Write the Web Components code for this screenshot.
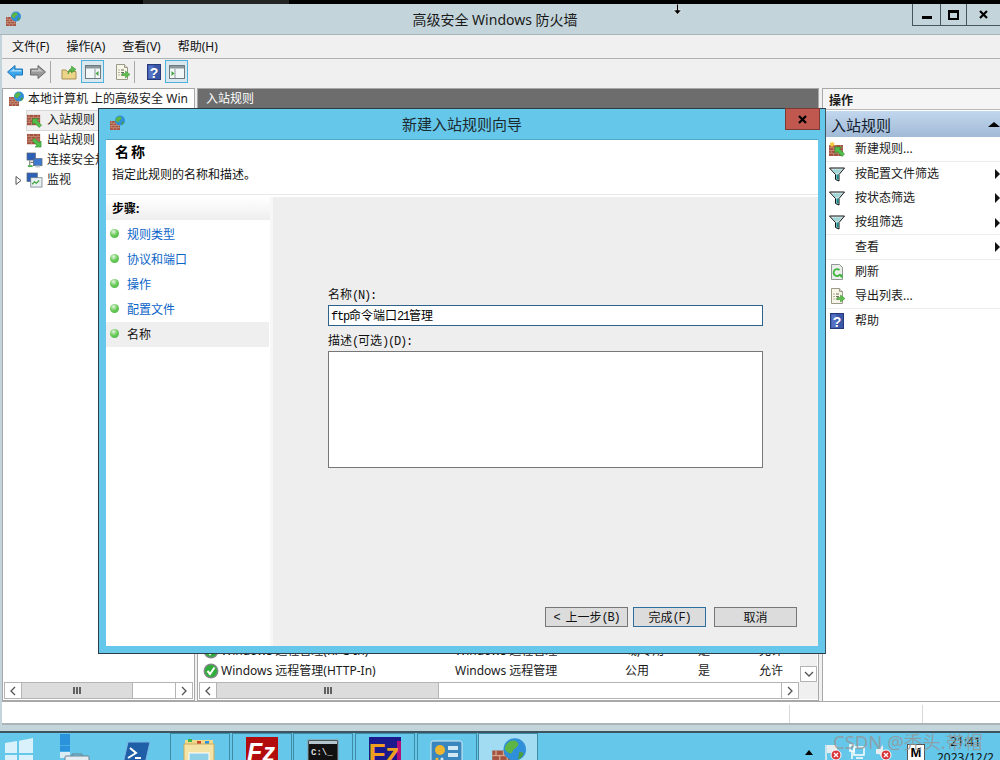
<!DOCTYPE html>
<html lang="zh-CN">
<head>
<meta charset="utf-8">
<title>高级安全 Windows 防火墙</title>
<style>
  html, body { margin: 0; padding: 0; }
  body {
    width: 1000px;
    height: 760px;
    overflow: hidden;
    position: relative;
    font: 12px/16px "Noto Sans", "Noto Sans CJK SC", sans-serif;
    color: #1a1a1a;
    background: #c3d5da;
  }
  .c { display: grid; grid-template-columns: 234px 170px 73px 61px 1fr; height: 20px; align-items: center; padding-left: 23px; }
</style>
</head>
<body>
<fw-topstrip></fw-topstrip>
<fw-titlebar>高级安全 Windows 防火墙</fw-titlebar>
<fw-menubar></fw-menubar>
<fw-toolbar></fw-toolbar>
<fw-main>
  <fw-tree slot="tree"></fw-tree>
  <fw-rules slot="rules">
    <div class="c"><span>Windows 远程管理(RPC-In)</span><span>Windows 远程管理</span><span>域,专用</span><span>是</span><span>允许</span></div>
    <div class="c"><span>Windows 远程管理(HTTP-In)</span><span>Windows 远程管理</span><span>公用</span><span>是</span><span>允许</span></div>
  </fw-rules>
  <fw-actions slot="actions"></fw-actions>
</fw-main>
<fw-statusbar></fw-statusbar>
<fw-taskbar></fw-taskbar>
<fw-wizard></fw-wizard>
<fw-watermark>CSDN @秃头.带帽</fw-watermark>

<script>
function bricks(x, y, w, h) {
  let lines = '';
  const row = h / 4;
  for (let i = 1; i < 4; i++) lines += `<path d="M${x} ${y + i * row}h${w}" stroke="#d3a48e" stroke-width=".6"/>`;
  for (let i = 0; i < 4; i++) {
    const off = i % 2 ? w / 3 : w / 6;
    for (let j = off; j < w; j += w / 3) lines += `<path d="M${x + j} ${y + i * row}v${row}" stroke="#d3a48e" stroke-width=".6"/>`;
  }
  return `<rect x="${x}" y="${y}" width="${w}" height="${h}" fill="#a4523f"/>${lines}`;
}
const GLOBE = `<circle cx="11" cy="5.5" r="5" fill="#2f8fd8"/><path d="M8 2.5c2-1.5 4-1 4.5.5s-2 2-2.500 3.500S8 7 7 6s0-2.500 1-3.500z" fill="#5cb545"/><path d="M13 6.500l2 .5c-.3 1.500-1.200 2.500-2.500 3z" fill="#4a9e3f"/>`;
const PAGE = `<path d="M2.500 .5h8l3 3v12h-11z" fill="#f7f5e6" stroke="#9a9a8a"/><path d="M10.500 .5v3h3" fill="#e4e2d2" stroke="#9a9a8a"/>`;
const ARROW_NW = `<path d="M6 6h6.500L10.500 8l5 5-2.500 2.500-5-5L6 12.500z" fill="#4fc04a" stroke="#2b8a2c" stroke-width=".6"/>`;
const ARROW_SE = `<path d="M15 15H8.500l2-2-5-5L8 5.500l5 5 2-2z" fill="#4fc04a" stroke="#2b8a2c" stroke-width=".6"/>`;
const PANEL = (side) => `<rect x=".5" y="1.500" width="15" height="13" fill="#f4f7f8" stroke="#6d7a80"/><rect x="1" y="2" width="14" height="2.500" fill="#8a979d"/><path d="M${side ? '6' : '10'} 5v9" stroke="#8a979d"/>` +
  (side ? `<path d="M2.500 7l3 2.500-3 2.500z" fill="#3fa53f"/>` : `<path d="M13.500 7l-3 2.500 3 2.500z" fill="#3fa53f"/>`);

const ICONS = {
  firewall: bricks(1, 6, 10, 9) + GLOBE,
  inbound: bricks(0, 2, 14, 11) + ARROW_NW,
  outbound: bricks(0, 1, 14, 11) + ARROW_SE,
  newrule: bricks(0, 4, 14, 11) + ARROW_NW + `<path d="M3 0l.8 2 2-.6-1 1.800 1.400 1.500-2.100 0L3 6.500 2.200 4.700l-2.100 0L1.500 3.200.5 1.400l2 .6z" fill="#f4c63a"/>`,
  connection: `<rect x="0" y="0" width="9" height="7.500" fill="#2b5fb8" stroke="#5a6a78" stroke-width=".8"/><rect x="7" y="6" width="9" height="7.500" fill="#3c78d0" stroke="#5a6a78" stroke-width=".8"/><path d="M1 13h5v2H1z" fill="#4fae4a"/><path d="M3 8v5M4 10h3" stroke="#555"/><path d="M9 13.500h5v2H9z" fill="#c4ccd0"/>`,
  monitor: `<rect x="0" y="0" width="11" height="9" fill="#2b5fb8" stroke="#5a6a78" stroke-width=".8"/><rect x="4" y="5" width="12" height="10" fill="#e8eff2" stroke="#6a7a84" stroke-width=".8"/><path d="M5.500 12l2.500-2.500 2 1.500 3-3" fill="none" stroke="#3fa53f" stroke-width="1.300"/>`,
  filter: `<path d="M.5 2h15L10 8.500V15l-3.500-1.500V8.500z" fill="#dfeeee" stroke="#111" stroke-width="1"/><path d="M7.500 8.500h2V14l-2-.9z" fill="#0f8a8a"/><path d="M3 3.500h10l-3.500 4h-3z" fill="#9fd6d6"/>`,
  refresh: `<path d="M2.500 .5h8l3 3v12h-11z" fill="#eceeec" stroke="#8f9a92"/><path d="M10.500 6a3.500 3.500 0 1 0 .8 4" fill="none" stroke="#3fb53f" stroke-width="1.800"/><path d="M9 10.500h4.500V14.500z" fill="#3fb53f"/>`,
  export: PAGE + `<path d="M4.500 6h1M7 6h3M4.500 8.500h1M7 8.500h3M4.500 11h1M7 11h3" stroke="#6d6d5f"/><path d="M8 9.500h3.500V7l4.500 3.500-4.500 3.500v-2.500H8z" fill="#5cc04a" stroke="#3a8d33" stroke-width=".5"/>`,
  help: `<rect x="1.500" y=".5" width="13" height="15" fill="#3a57a8" stroke="#26397a"/><rect x="2.500" y="1.500" width="5" height="13" fill="#5673c4"/><text x="8" y="13.500" text-anchor="middle" font-family="Liberation Sans" font-weight="700" font-size="14" fill="#fff">?</text>`,
  back: `<path d="M.5 8L8 1.500V5h7.500v6H8v3.500z" fill="#3da6ec" stroke="#1d75b8"/><path d="M2.500 8L7 4.500V6h7.500v1.500H4z" fill="#a9dcfa"/>`,
  forward: `<path d="M15.500 8L8 1.500V5H.5v6H8v3.500z" fill="#9a9a9a" stroke="#6a6a6a"/><path d="M2 6h6V4l5 3.500H2z" fill="#c7c7c7"/>`,
  folderup: `<path d="M1 6h4l1 1.500h9V15H1z" fill="#ecd489" stroke="#a99150"/><path d="M7 10c0-3.500 1.500-5 3.500-5.500V2L15 5.500 10.500 9V6.500C9 7 8 8 7 10z" fill="#59b94b" stroke="#2e8a2c" stroke-width=".5"/>`,
  panelL: PANEL(false),
  panelR: PANEL(true),
  check: `<circle cx="8" cy="8" r="7.500" fill="#7f8a88"/><circle cx="8" cy="8" r="6" fill="#2fae3a"/><path d="M4.500 8l2.500 3L11.500 4.500" fill="none" stroke="#fff" stroke-width="2"/>`,
  server: `<rect x="1" y="0" width="10" height="11" fill="#2a93dc"/><rect x="1" y="11.500" width="10" height="6" fill="#2a93dc"/><rect x="1" y="18" width="10" height="6" fill="#dcecf4"/><rect x="6" y="22" width="24" height="12" rx="1" fill="#e4edf1" stroke="#6d8390"/><path d="M13 22v-2h10v2" fill="none" stroke="#6d8390"/>`,
  powershell: `<path d="M6 1h22l-5 22H1z" fill="#1f5fa8" stroke="#7fb7e4"/><path d="M8 7l6 5-8 5" fill="none" stroke="#fff" stroke-width="2"/><path d="M13 17h6" stroke="#fff" stroke-width="2"/>`,
  folder: `<rect x="1" y="1" width="28" height="5" fill="#f0d98a"/><rect x="4" y="0" width="4" height="3" fill="#3db54a"/><rect x="13" y="2" width="4" height="3" fill="#d0452f"/><rect x="21" y="2" width="4" height="3" fill="#2a93dc"/><path d="M0 5h30v26H0z" fill="#f3e3a6" stroke="#c8ab5e"/><rect x="5" y="14" width="20" height="15" fill="#8fd0e8" stroke="#fff"/>`,
  filezilla: `<rect x="0" y="0" width="32" height="32" fill="#b30c0c"/><text x="15" y="24" text-anchor="middle" font-family="Liberation Sans" font-weight="700" font-style="italic" font-size="25" fill="#fff">Fz</text>`,
  cmd: `<rect x="0" y="0" width="30" height="28" fill="#111" stroke="#8a949a"/><rect x="1" y="1" width="28" height="3" fill="#b4c4cc"/><text x="3" y="15" font-family="Liberation Mono" font-weight="700" font-size="9" fill="#ddd">C:\\_</text>`,
  fz: `<rect x="0" y="0" width="32" height="32" fill="#1a1a8c"/><rect x="28" y="4" width="4" height="28" fill="#b0127a"/><text x="15" y="26" text-anchor="middle" font-family="Liberation Sans" font-weight="700" font-size="28" fill="#f0a020">Fz</text>`,
  control: `<rect x="0" y="0" width="31" height="28" rx="2" fill="#3a86bf" stroke="#d5e8f2"/><circle cx="9" cy="9" r="5" fill="#f0b62e"/><rect x="17" y="5" width="10" height="4" fill="#d0e8f4"/><rect x="17" y="12" width="10" height="4" fill="#d0e8f4"/><circle cx="6" cy="18" r="1.500" fill="#f0b62e"/><circle cx="11" cy="18" r="1.500" fill="#d0e8f4"/>`,
  flag: `<path d="M1 1v15" stroke="#e8eef0" stroke-width="1.500"/><path d="M2 1h10v8H2z" fill="#e8eef0"/><circle cx="11" cy="11" r="5" fill="#d8343a" stroke="#fff"/><path d="M9 9l4 4M13 9l-4 4" stroke="#fff" stroke-width="1.300"/>`,
  network: `<rect x="5" y="3" width="10" height="8" fill="none" stroke="#fff" stroke-width="1.500"/><path d="M1 1h4v6H1zM3 7v8M7 14h7" fill="none" stroke="#fff" stroke-width="1.500"/>`,
  speaker: `<path d="M1 5h3l4-4v13l-4-4H1z" fill="#e8eef0"/><circle cx="11" cy="11" r="5" fill="#d8343a" stroke="#fff"/><path d="M9 9l4 4M13 9l-4 4" stroke="#fff" stroke-width="1.300"/>`
};

class FwIcon extends HTMLElement {
  connectedCallback() {
    const name = this.getAttribute('name');
    const w = this.getAttribute('size') || 16;
    const vb = this.getAttribute('vb') || 16;
    this.attachShadow({ mode: 'open' }).innerHTML = `
      <style>:host { display: block; width: ${w}px; height: ${w}px; flex: none; } svg { display: block; overflow: visible; }</style>
      <svg width="${w}" height="${w}" viewBox="0 0 ${vb} ${vb}">${ICONS[name]}</svg>`;
  }
}
customElements.define('fw-icon', FwIcon);

class FwTopstrip extends HTMLElement {
  connectedCallback() {
    this.attachShadow({ mode: 'open' }).innerHTML = `
      <style>
        :host { display: flex; height: 4px; background: #000; position: relative; }
        .a { width: 45px; margin-left: 2px; background: #000; }
        .b { width: 146px; margin-left: 96px; background: #242424; }
        svg { position: absolute; left: 673px; top: 4px; z-index: 5; }
      </style>
      <div class="a"></div><div class="b"></div>
      <svg width="9" height="11" viewBox="0 0 9 11"><path d="M3.500 0h2v6H8.500L4.500 10.500.5 6h3z" fill="#000" stroke="#fff" stroke-width=".7"/></svg>`;
  }
}
customElements.define('fw-topstrip', FwTopstrip);

class FwTitlebar extends HTMLElement {
  connectedCallback() {
    this.attachShadow({ mode: 'open' }).innerHTML = `
      <style>
        :host { display: flex; height: 30px; background: #c3d5da; border-bottom: 1px solid #a9b4b8; position: relative; box-sizing: content-box; }
        .icon { padding: 7px 0 0 5px; }
        .title { text-align: center; font-size: 14px; line-height: 32px; color: #1a1a1a; position: absolute; left: 0; right: 10px; }
        .ctl { margin-left: auto; display: flex; height: 21px; border: 1px solid #46565e; border-top: 0; border-right: 0; position: relative; }
        .ctl div { display: flex; align-items: center; justify-content: center; }
        .min { width: 27px; border-right: 1px solid #46565e; }
        .max { width: 25px; border-right: 1px solid #46565e; }
        .cls { width: 33px; }
        .min i { width: 10px; height: 3px; background: #000; margin-top: 6px; }
        .max i { width: 7px; height: 5px; border: 2px solid #000; border-top-width: 3px; }
      </style>
      <div class="icon"><fw-icon name="firewall" size="16"></fw-icon></div>
      <div class="title"><slot></slot></div>
      <div class="ctl">
        <div class="min"><i></i></div>
        <div class="max"><i></i></div>
        <div class="cls"><svg width="9" height="9" viewBox="0 0 9 9"><path d="M1 1l7 7M8 1L1 8" stroke="#000" stroke-width="2.200"/></svg></div>
      </div>`;
  }
}
customElements.define('fw-titlebar', FwTitlebar);

class FwMenubar extends HTMLElement {
  connectedCallback() {
    const items = ['文件(F)', '操作(A)', '查看(V)', '帮助(H)'];
    this.attachShadow({ mode: 'open' }).innerHTML = `
      <style>
        :host { display: flex; height: 23px; margin: 0 0 0 2px; padding-left: 10px; gap: 17px; background: #f0f0f0; border-bottom: 1px solid #aeb2b4; align-items: center; font-size: 12px; color: #111; }
      </style>
      ${items.map(t => `<span>${t}</span>`).join('')}`;
  }
}
customElements.define('fw-menubar', FwMenubar);

class FwToolbar extends HTMLElement {
  connectedCallback() {
    this.attachShadow({ mode: 'open' }).innerHTML = `
      <style>
        :host { display: flex; height: 29px; box-sizing: border-box; margin-left: 2px; background: #f0f0f0; align-items: center; padding: 1px 0 5px 5px; }
        .sep { width: 1px; height: 22px; background: #a8a8a8; }
        .on { width: 21px; height: 21px; border: 1px solid #4fb0dc; background: #d9e8ef; display: flex; align-items: center; justify-content: center; }
      </style>
      <fw-icon name="back"></fw-icon>
      <fw-icon name="forward" style="margin-left:7px"></fw-icon>
      <div class="sep" style="margin-left:4px"></div>
      <fw-icon name="folderup" style="margin-left:10px"></fw-icon>
      <div class="on" style="margin-left:4px"><fw-icon name="panelL"></fw-icon></div>
      <fw-icon name="export" style="margin-left:10px"></fw-icon>
      <div class="sep" style="margin-left:4px"></div>
      <fw-icon name="help" style="margin-left:11px"></fw-icon>
      <div class="on" style="margin-left:3px"><fw-icon name="panelR"></fw-icon></div>`;
  }
}
customElements.define('fw-toolbar', FwToolbar);

class FwMain extends HTMLElement {
  connectedCallback() {
    this.attachShadow({ mode: 'open' }).innerHTML = `
      <style>
        :host { display: grid; grid-template-columns: 193px 622px 1fr; gap: 2px; height: 613px; margin-left: 2px; background: #f0f0f0; }
      </style>
      <slot name="tree"></slot><slot name="rules"></slot><slot name="actions"></slot>`;
  }
}
customElements.define('fw-main', FwMain);

class FwScroll extends HTMLElement {
  connectedCallback() {
    const thumb = this.getAttribute('thumb');
    const chev = (d) => `<svg width="8" height="10" viewBox="0 0 8 10"><path d="${d}" fill="none" stroke="#555" stroke-width="1.300"/></svg>`;
    this.attachShadow({ mode: 'open' }).innerHTML = `
      <style>
        :host { display: flex; height: 15px; border: 1px solid #b4b4b4; background: #fff; }
        .a { width: 16px; display: flex; align-items: center; justify-content: center; background: #fff; flex: none; }
        .l { border-right: 1px solid #b4b4b4; }
        .r { border-left: 1px solid #b4b4b4; margin-left: auto; }
        .t { width: ${thumb}px; background: #dcdcdc; border-right: 1px solid #b4b4b4; display: flex; align-items: center; justify-content: center; gap: 1px; }
        .t i { width: 2px; height: 7px; background: #606060; }
      </style>
      <div class="a l">${chev('M6 1L2 5l4 4')}</div>
      <div class="t"><i></i><i></i><i></i></div>
      <div class="a r">${chev('M2 1l4 4-4 4')}</div>`;
  }
}
customElements.define('fw-scroll', FwScroll);

class FwTreeItem extends HTMLElement {
  connectedCallback() {
    const sel = this.hasAttribute('selected');
    const exp = this.hasAttribute('expander');
    this.attachShadow({ mode: 'open' }).innerHTML = `
      <style>
        :host { display: flex; height: 20px; align-items: center; padding-left: 24px; position: relative; }
        .box { display: flex; align-items: center; gap: 5px; height: 19px; padding-right: 5px; ${sel ? 'background:#f0f0f0;outline:1px solid #d8d8d8;' : ''} width: 165px; }
        svg { position: absolute; left: 12px; top: 6px; }
      </style>
      ${exp ? '<svg width="7" height="9" viewBox="0 0 7 9"><path d="M1 .5l5 4-5 4z" fill="#fff" stroke="#555"/></svg>' : ''}
      <div class="box"><fw-icon name="${this.getAttribute('icon')}" size="15"></fw-icon><span><slot></slot></span></div>`;
  }
}
customElements.define('fw-tree-item', FwTreeItem);

class FwTree extends HTMLElement {
  connectedCallback() {
    this.attachShadow({ mode: 'open' }).innerHTML = `
      <style>
        :host { display: flex; flex-direction: column; background: #fff; border: 1px solid #a8a8a8; box-sizing: border-box; height: 613px; }
        .root { display: flex; height: 20px; align-items: center; gap: 4px; padding-left: 5px; white-space: nowrap; overflow: hidden; flex: none; }
        .body { flex: 1; padding-top: 1px; }
        fw-scroll { margin: 0 1px 1px; }
      </style>
      <div class="root"><fw-icon name="firewall"></fw-icon><span>本地计算机 上的高级安全 Win</span></div>
      <div class="body">
        <fw-tree-item icon="inbound" selected>入站规则</fw-tree-item>
        <fw-tree-item icon="outbound">出站规则</fw-tree-item>
        <fw-tree-item icon="connection">连接安全规则</fw-tree-item>
        <fw-tree-item icon="monitor" expander>监视</fw-tree-item>
      </div>
      <fw-scroll thumb="110"></fw-scroll>`;
  }
}
customElements.define('fw-tree', FwTree);

class FwRules extends HTMLElement {
  connectedCallback() {
    this.attachShadow({ mode: 'open' }).innerHTML = `
      <style>
        :host { display: flex; flex-direction: column; background: #fff; border: 1px solid #a8a8a8; box-sizing: border-box; height: 613px; }
        .head { height: 19px; background: #6d6d6d; color: #fff; line-height: 20px; padding-left: 8px; flex: none; }
        .mid { flex: 1; display: flex; min-height: 0; }
        .list { flex: 1; display: flex; flex-direction: column; justify-content: flex-end; position: relative; padding-bottom: 1px; }
        .list fw-icon { position: absolute; left: 5px; bottom: 3px; }
        .list .i2 { bottom: 23px; }
        .vs { width: 17px; background: #f0f0f0; display: flex; flex-direction: column; justify-content: flex-end; flex: none; margin-right: 1px; }
        .down { height: 14px; border: 1px solid #b4b4b4; background: #fff; display: flex; align-items: center; justify-content: center; }
        .foot { display: flex; margin: 0 0 1px 1px; }
        fw-scroll { width: 598px; }
        .corner { flex: 1; background: #f0f0f0; }
      </style>
      <div class="head">入站规则</div>
      <div class="mid">
        <div class="list"><fw-icon class="i2" name="check"></fw-icon><fw-icon name="check"></fw-icon><slot></slot></div>
        <div class="vs"><div class="down"><svg width="10" height="8" viewBox="0 0 10 8"><path d="M1 2l4 4 4-4" fill="none" stroke="#555" stroke-width="1.300"/></svg></div></div>
      </div>
      <div class="foot"><fw-scroll thumb="221"></fw-scroll><div class="corner"></div></div>`;
  }
}
customElements.define('fw-rules', FwRules);

class FwAction extends HTMLElement {
  connectedCallback() {
    const icon = this.getAttribute('icon');
    const sep = this.hasAttribute('sep');
    const arrow = this.hasAttribute('arrow');
    this.attachShadow({ mode: 'open' }).innerHTML = `
      <style>
        :host { display: flex; height: 24.500px; align-items: center; padding-left: 6px; box-sizing: border-box; position: relative; ${sep ? 'border-bottom: 1px solid #ececec;' : ''} }
        .ic { width: 26px; flex: none; }
        .ar { position: absolute; right: 0; top: 7px; width: 0; height: 0; border: 5px solid transparent; border-left: 5px solid #111; border-right: 0; }
      </style>
      <div class="ic">${icon ? `<fw-icon name="${icon}"></fw-icon>` : ''}</div>
      <span><slot></slot></span>
      ${arrow ? '<i class="ar"></i>' : ''}`;
  }
}
customElements.define('fw-action', FwAction);

class FwActions extends HTMLElement {
  connectedCallback() {
    this.attachShadow({ mode: 'open' }).innerHTML = `
      <style>
        :host { display: block; margin-left: 1px; background: #fff; border-left: 1px solid #a8a8a8; border-top: 1px solid #a8a8a8; box-sizing: border-box; height: 613px; }
        .h { height: 21px; line-height: 23px; background: #f5f5f5; border-bottom: 1px solid #b8b8b8; padding-left: 6px; font-weight: 700; font-size: 12px; box-sizing: border-box; }
        .s { height: 26px; line-height: 28px; padding-left: 8px; font-size: 15px; color: #14202e; background: linear-gradient(#c2d7ee, #a1bad6); position: relative; margin-top: 1px; }
        .s i { position: absolute; right: 0; top: 11px; border: 4px solid transparent; border-bottom: 5px solid #000; border-top: 0; border-left-width: 6px; border-right-width: 6px; }
      </style>
      <div class="h">操作</div>
      <div class="s">入站规则<i></i></div>
      <div class="items">
        <fw-action icon="newrule" sep>新建规则...</fw-action>
        <fw-action icon="filter" arrow>按配置文件筛选</fw-action>
        <fw-action icon="filter" arrow>按状态筛选</fw-action>
        <fw-action icon="filter" arrow sep>按组筛选</fw-action>
        <fw-action arrow sep>查看</fw-action>
        <fw-action icon="refresh">刷新</fw-action>
        <fw-action icon="export" sep>导出列表...</fw-action>
        <fw-action icon="help">帮助</fw-action>
      </div>`;
  }
}
customElements.define('fw-actions', FwActions);

class FwStatusbar extends HTMLElement {
  connectedCallback() {
    this.attachShadow({ mode: 'open' }).innerHTML = `
      <style>
        :host { display: grid; grid-template-columns: 787px 133px 1fr; height: 21px; margin-left: 2px; background: #fff; border-top: 1px solid #a8a8a8; border-bottom: 2px solid #a9b4b8; box-sizing: content-box; }
        div + div { border-left: 1px solid #d8d8d8; margin: 3px 0 0; }
      </style>
      <div></div><div></div><div></div>`;
  }
}
customElements.define('fw-statusbar', FwStatusbar);

class FwTaskButton extends HTMLElement {
  connectedCallback() {
    const active = this.hasAttribute('active');
    this.attachShadow({ mode: 'open' }).innerHTML = `
      <style>
        :host { display: flex; justify-content: center; width: 60px; height: 27px; flex: none; overflow: hidden; padding-top: ${this.getAttribute('top') || 4}px; box-sizing: border-box; border: 1px solid #3f8ba6; border-bottom: 0; margin-right: 1.700px; background: ${active ? '#a1dcf2' : 'transparent'}; }
      </style>
      <slot></slot>`;
  }
}
customElements.define('fw-task-button', FwTaskButton);

class FwTaskbar extends HTMLElement {
  connectedCallback() {
    this.attachShadow({ mode: 'open' }).innerHTML = `
      <style>
        :host { position: absolute; left: 0; right: 0; bottom: 0; height: 27px; display: flex; background: #65c8ea; border-top: 2px solid #3d5560; box-sizing: content-box; overflow: hidden; }
        .pin { display: flex; width: 170px; flex: none; padding-left: 5px; box-sizing: border-box; align-items: flex-start; }
        .tray { margin-left: auto; display: flex; align-items: flex-start; padding-top: 11px; }
        .tri { width: 0; height: 0; border: 4px solid transparent; border-bottom: 5px solid #000; border-top: 0; margin: 6px 12px 0 0; }
        .m { width: 16px; height: 16px; border: 1px solid #555; background: #fff; text-align: center; font: 700 13px/16px "Liberation Sans", sans-serif; color: #000; margin: 0 0 0 16px; }
        .clock { width: 75px; box-sizing: border-box; padding-left: 6px; text-align: center; margin-top: -10px; color: #111; line-height: 16px; }
      </style>
      <div class="pin">
        <svg width="28" height="30" viewBox="0 0 28 30" style="margin-top:5px"><path d="M0 5l12-2v12H0zM14 2.700L28 0v15H14zM0 17h12v12L0 27zM14 17h14v13l-14-2z" fill="#fff" fill-opacity=".75"/></svg>
        <fw-icon name="server" size="36" vb="36" style="margin:1px 0 0 26px"></fw-icon>
        <fw-icon name="powershell" size="30" vb="30" style="margin:8px 0 0 27px"></fw-icon>
      </div>
      <fw-task-button top="5"><fw-icon name="folder" size="32" vb="32"></fw-icon></fw-task-button>
      <fw-task-button top="3"><fw-icon name="filezilla" size="32" vb="32"></fw-icon></fw-task-button>
      <fw-task-button top="6"><fw-icon name="cmd" size="30" vb="30"></fw-icon></fw-task-button>
      <fw-task-button top="3"><fw-icon name="fz" size="32" vb="32"></fw-icon></fw-task-button>
      <fw-task-button top="7"><fw-icon name="control" size="32" vb="32"></fw-icon></fw-task-button>
      <fw-task-button active top="3"><fw-icon name="firewall" size="36"></fw-icon></fw-task-button>
      <div class="tray">
        <div class="tri"></div>
        <fw-icon name="flag"></fw-icon>
        <fw-icon name="network" style="margin-left:8px"></fw-icon>
        <fw-icon name="speaker" style="margin-left:10px"></fw-icon>
        <div class="m">M</div>
        <div class="clock">21:41<br>2023/12/2</div>
      </div>`;
  }
}
customElements.define('fw-taskbar', FwTaskbar);

class FwStep extends HTMLElement {
  connectedCallback() {
    const cur = this.hasAttribute('current');
    this.attachShadow({ mode: 'open' }).innerHTML = `
      <style>
        :host { display: flex; height: 25px; align-items: center; padding-left: 4px; gap: 8px; width: 163px; box-sizing: border-box; color: ${cur ? '#111' : '#0a64c8'}; background: ${cur ? '#efefef' : 'transparent'}; }
        i { width: 9px; height: 9px; border-radius: 50%; background: radial-gradient(circle at 40% 30%, #e8f4e4 0, #6ccb5a 45%, #3fb23c 100%); margin-top: -2px; }
      </style>
      <i></i><span><slot></slot></span>`;
  }
}
customElements.define('fw-step', FwStep);

class FwButton extends HTMLElement {
  connectedCallback() {
    const focused = this.hasAttribute('focused');
    this.attachShadow({ mode: 'open' }).innerHTML = `
      <style>
        :host { display: flex; align-items: center; justify-content: center; height: 16px; padding-top: 2px; box-sizing: content-box; background: #dcdcdc; border: 1px solid ${focused ? '#2c6f9e' : '#777'}; color: #111; font-size: 12px; white-space: pre; }
        b { font: 12px/1 "Liberation Mono", monospace; letter-spacing: -1.200px; }
      </style>
      ${this.hasAttribute('prefix') ? '<b>&lt; </b>' : ''}<slot></slot>${this.getAttribute('key') ? `<b>(${this.getAttribute('key')})</b>` : ''}`;
  }
}
customElements.define('fw-button', FwButton);

class FwWizard extends HTMLElement {
  connectedCallback() {
    this.attachShadow({ mode: 'open' }).innerHTML = `
      <style>
        :host { position: absolute; left: 98px; top: 108px; width: 728px; height: 546px; box-sizing: border-box; background: #65c8ea; border: 1px solid #2c3d47; border-right-color: #3b5560; display: flex; flex-direction: column; }
        .bar { height: 30px; display: flex; position: relative; flex: none; }
        .bar fw-icon { margin: 6px 0 0 10px; }
        .bar .t { position: absolute; left: 0; right: 0; text-align: center; line-height: 30px; font-size: 15px; color: #1c2a30; }
        .close { position: absolute; right: 5px; top: -1px; width: 33px; height: 20px; background: #c0584f; border: 1px solid #7b3a33; display: flex; align-items: center; justify-content: center; }
        .client { margin: 0 7px 7px; flex: 1; display: flex; flex-direction: column; background: #fff; min-height: 0; border-top: 1px solid #4fa9c6; }
        .head { height: 55px; flex: none; padding-left: 6px; box-sizing: border-box; border-bottom: 1px solid #e8e8e8; }
        .head h2 { margin: 0; padding: 4px 0 0 3px; font-size: 14px; line-height: 16px; letter-spacing: 2px; font-weight: 700; color: #000; }
        .head p { margin: 7px 0 0; line-height: 16px; color: #111; }
        .body { flex: 1; display: flex; margin-top: 2px; min-height: 0; }
        .steps { width: 164px; flex: none; }
        .steps .cap { height: 23px; line-height: 24px; padding-left: 6px; font-weight: 700; background: linear-gradient(#fff, #eee); color: #000; margin-bottom: 2px; }
        .pane { margin-left: 3px; flex: 1; background: #eeeeee; display: flex; flex-direction: column; padding: 90px 21px 19px 55px; min-width: 0; box-shadow: -3px 0 0 #f7f7f7; }
        label { display: block; height: 15px; line-height: 15px; color: #111; }
        b { font: 12px/1 "Liberation Mono", monospace; letter-spacing: -1.200px; }
        .inp { width: 435px; height: 21px; box-sizing: border-box; border: 1px solid #2c628b; background: #fff; margin-top: 3px; line-height: 19px; padding-left: 2px; color: #000; }
        .area { width: 435px; height: 117px; box-sizing: border-box; border: 1px solid #777; background: #fff; margin-top: 3px; }
        .btns { margin-top: auto; display: flex; justify-content: flex-end; }
      </style>
      <div class="bar">
        <fw-icon name="firewall"></fw-icon>
        <div class="t">新建入站规则向导</div>
        <div class="close"><svg width="9" height="9" viewBox="0 0 9 9"><path d="M1 1l7 7M8 1L1 8" stroke="#000" stroke-width="2.200"/></svg></div>
      </div>
      <div class="client">
        <div class="head">
          <h2>名称</h2>
          <p>指定此规则的名称和描述。</p>
        </div>
        <div class="body">
          <div class="steps">
            <div class="cap">步骤:</div>
            <fw-step>规则类型</fw-step>
            <fw-step>协议和端口</fw-step>
            <fw-step>操作</fw-step>
            <fw-step>配置文件</fw-step>
            <fw-step current>名称</fw-step>
          </div>
          <div class="pane">
            <label>名称<b>(N):</b></label>
            <div class="inp"><b>ftp</b>命令端口<b>21</b>管理</div>
            <label style="margin-top:7px">描述<b>(</b>可选<b>)(D):</b></label>
            <div class="area"></div>
            <div class="btns">
              <fw-button prefix key="B" style="width:81px">上一步</fw-button>
              <fw-button focused key="F" style="width:71px;margin-left:5px">完成</fw-button>
              <fw-button style="width:81px;margin-left:8px">取消</fw-button>
            </div>
          </div>
        </div>
      </div>`;
  }
}
customElements.define('fw-wizard', FwWizard);

class FwWatermark extends HTMLElement {
  connectedCallback() {
    this.attachShadow({ mode: 'open' }).innerHTML = `
      <style>
        :host { position: absolute; left: 833px; top: 731px; font-size: 18.500px; line-height: 22px; color: rgba(150, 150, 150, .8); white-space: nowrap; }
      </style>
      <slot></slot>`;
  }
}
customElements.define('fw-watermark', FwWatermark);
</script>
</body>
</html>
